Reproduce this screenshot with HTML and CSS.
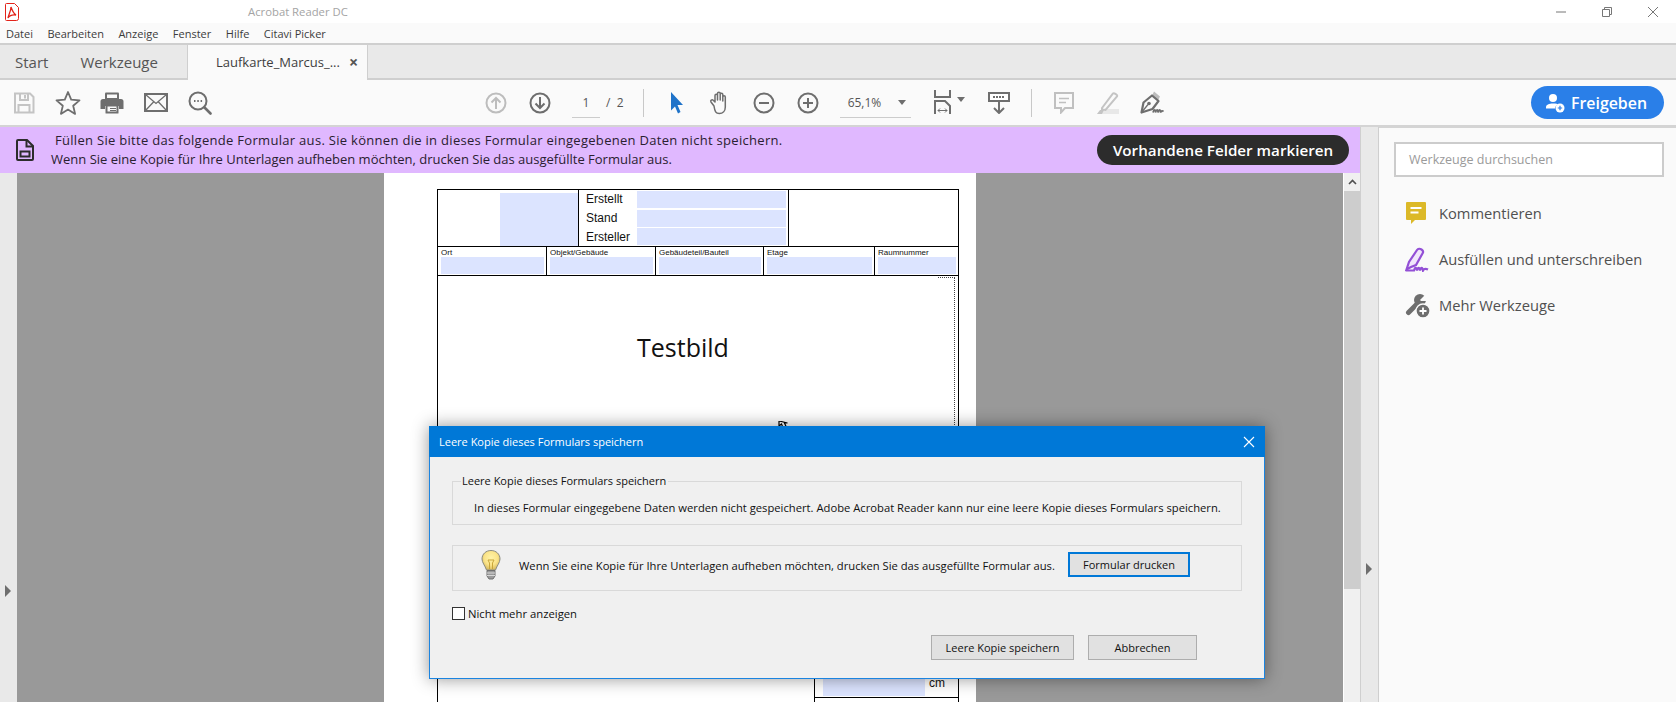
FILE: index.html
```html
<!DOCTYPE html>
<html lang="de">
<head>
<meta charset="utf-8">
<title>Acrobat Reader DC</title>
<link rel="stylesheet" href="styles.css">
</head>
<body>
<div class="app">
  <header class="titlebar">
    <svg class="pdf-logo" width="14" height="18" viewBox="0 0 14 18"><path d="M1.500.5h8l4 4v11a2 2 0 0 1-2 2h-10a1 1 0 0 1-1-1v-15a1 1 0 0 1 1-1z" fill="#fff" stroke="#e2231a"/><path d="M6 4c1 3 2 6 5 8-3-.5-6 0-8 3 .5-3 3-7 3-11z" fill="none" stroke="#e2231a" stroke-width="1.300"/></svg>
    <span class="app-title">Acrobat Reader DC</span>
    <div class="winctl">
      <svg width="12" height="12" viewBox="0 0 12 12"><path d="M1 6h10" stroke="#777"/></svg>
      <svg width="12" height="12" viewBox="0 0 12 12"><path d="M1.500 3.500h7v7h-7zM3.500 3.500v-2h7v7h-2" fill="none" stroke="#777"/></svg>
      <svg width="12" height="12" viewBox="0 0 12 12"><path d="M1 1l10 10M11 1L1 11" stroke="#777"/></svg>
    </div>
  </header>
  <nav class="menubar">
    <span>Datei</span><span>Bearbeiten</span><span>Anzeige</span><span>Fenster</span><span>Hilfe</span><span>Citavi Picker</span>
  </nav>
  <div class="tabs">
    <span class="tab-home start">Start</span>
    <span class="tab-home tools-tab">Werkzeuge</span>
    <div class="tab-doc"><span>Laufkarte_Marcus_...</span><b class="tab-x">×</b></div>
  </div>
  <div class="toolbar">
    <div class="tb-group first">
      <button class="tb"><svg width="22" height="22" viewBox="0 0 22 22"><path d="M2 1.500h15l3.500 3.500v15.500h-18.500z" fill="none" stroke="#c4c4c4" stroke-width="2"/><path d="M7 2v6h8V2M12 3v3.500M5.500 20v-7h11v7" fill="none" stroke="#c4c4c4" stroke-width="2"/></svg></button>
      <button class="tb"><svg width="26" height="26" viewBox="0 0 26 26"><path d="M13 2l3.200 7.700 8.300.7-6.300 5.400 1.900 8.100-7.100-4.300-7.100 4.300 1.900-8.100-6.300-5.400 8.300-.7z" fill="none" stroke="#6e6e6e" stroke-width="1.800" stroke-linejoin="round"/></svg></button>
      <button class="tb"><svg width="24" height="22" viewBox="0 0 24 22"><path d="M5 7V1.500a1 1 0 0 1 1-1h12a1 1 0 0 1 1 1V7z" fill="#6e6e6e"/><path d="M7 2.500h10V6H7z" fill="#fafafa"/><path d="M3 7h18a2.500 2.500 0 0 1 2.500 2.500V17H19v-3H5v3H.5V9.500A2.500 2.500 0 0 1 3 7z" fill="#6e6e6e"/><path d="M5.500 13.500h13V21a.500.500 0 0 1-.5.500H6a.500.500 0 0 1-.5-.5z" fill="#6e6e6e"/><path d="M7.500 14.500h9v5h-9z" fill="#fafafa"/><path d="M10 16.500h6M10 18.500h6" stroke="#6e6e6e"/></svg></button>
      <button class="tb"><svg width="24" height="19" viewBox="0 0 24 19"><path d="M1 1h22v17H1z" fill="none" stroke="#6e6e6e" stroke-width="2"/><path d="M1.500 1.500L12 10.500l10.500-9M1.500 17.500l8-8.500M22.500 17.500l-8-8.500" fill="none" stroke="#6e6e6e" stroke-width="1.300"/></svg></button>
      <button class="tb"><svg width="24" height="24" viewBox="0 0 24 24"><circle cx="10" cy="10" r="8.500" fill="none" stroke="#6e6e6e" stroke-width="2"/><path d="M16.500 16.500l6 6" stroke="#6e6e6e" stroke-width="2.600" stroke-linecap="round"/><path d="M6 10h1.500M9.300 10h1.500M12.600 10h1.500" stroke="#6e6e6e" stroke-width="1.800"/></svg></button>
    </div>
    <div class="tb-group pagebtns">
      <button class="tb"><svg width="22" height="22" viewBox="0 0 22 22"><circle cx="11" cy="11" r="9.500" fill="none" stroke="#bdbdbd" stroke-width="2"/><path d="M11 17V6M6.500 10.500L11 6l4.500 4.500" fill="none" stroke="#bdbdbd" stroke-width="2"/></svg></button>
      <button class="tb"><svg width="22" height="22" viewBox="0 0 22 22"><circle cx="11" cy="11" r="9.500" fill="none" stroke="#6e6e6e" stroke-width="2"/><path d="M11 5v11M6.500 11.500L11 16l4.500-4.500" fill="none" stroke="#6e6e6e" stroke-width="2"/></svg></button>
    </div>
    <span class="pageinput">1</span>
    <span class="pagecount">/ &nbsp;2</span>
    <i class="tb-sep sep-a"></i>
    <div class="tb-group viewtools">
      <button class="tb nar"><svg width="14" height="22" viewBox="0 0 14 22"><path d="M1 0l12 13H7.500l3 7-2.500 1.500-3-7L1 18.500z" fill="#1f73c9"/></svg></button>
      <button class="tb nar"><svg width="22" height="24" viewBox="0 0 22 24"><path d="M5 15L2 11c-1-1.500 1-3 2.200-1.800L6 11V4.500c0-1.800 2.500-1.800 2.500 0V9 2.500c0-1.800 2.700-1.800 2.700 0V9 3.500c0-1.800 2.600-1.800 2.600 0V10 6c0-1.800 2.500-1.800 2.500 0v10c0 4-2.500 6.500-6 6.500-3.500 0-4.500-2-5.300-7.500z" fill="none" stroke="#6e6e6e" stroke-width="1.500" stroke-linejoin="round"/></svg></button>
      <button class="tb nar"><svg width="22" height="22" viewBox="0 0 22 22"><circle cx="11" cy="11" r="9.500" fill="none" stroke="#6e6e6e" stroke-width="2"/><path d="M6 11h10" stroke="#6e6e6e" stroke-width="2"/></svg></button>
      <button class="tb nar"><svg width="22" height="22" viewBox="0 0 22 22"><circle cx="11" cy="11" r="9.500" fill="none" stroke="#6e6e6e" stroke-width="2"/><path d="M6 11h10M11 6v10" stroke="#6e6e6e" stroke-width="2"/></svg></button>
    </div>
    <div class="zoombox"><span>65,1%</span><i class="caret"></i></div>
    <svg class="ic-fit" width="17" height="25" viewBox="0 0 17 25"><path d="M1 0v7h15V0" fill="none" stroke="#6e6e6e" stroke-width="2"/><path d="M1 24V11h10l5 5v8" fill="none" stroke="#6e6e6e" stroke-width="2"/><path d="M4 20.500h9M6 18.500l-2 2 2 2M11 18.500l2 2-2 2" fill="none" stroke="#6e6e6e"/></svg>
    <i class="caret fit-caret"></i>
    <svg class="ic-next" width="22" height="22" viewBox="0 0 22 22"><path d="M1 1h20v8H1z" fill="#fff" stroke="#6e6e6e" stroke-width="2"/><path d="M5 5h12" stroke="#6e6e6e" stroke-width="2" stroke-dasharray="2 1"/><path d="M11 9v12M6 16l5 5 5-5" fill="none" stroke="#6e6e6e" stroke-width="2"/></svg>
    <i class="tb-sep sep-b"></i>
    <svg class="ic-comment" width="20" height="22" viewBox="0 0 20 22"><path d="M1 1h18v15H11l-4 4.500V16H1z" fill="none" stroke="#c0c0c0" stroke-width="2"/><path d="M5 6.500h10M5 10.500h7" stroke="#c0c0c0" stroke-width="1.500"/></svg>
    <svg class="ic-high" width="22" height="22" viewBox="0 0 22 22"><path d="M0 22h22v-5H7l-2 2H3z" fill="#e8e8e8"/><path d="M0 22l3-4 4 0-2 4z" fill="#c4c4c4"/><path d="M5 16L16 1.500c1-1 5 1.500 4 3L8.500 18l-3.500-.5z" fill="none" stroke="#c4c4c4" stroke-width="2"/></svg>
    <svg class="ic-pen" width="24" height="23" viewBox="0 0 24 23"><path d="M12 5l2-4.500 6 5-2 4z" fill="#bdbdbd"/><path d="M1.500 21.500l2-10L12 4.500l6.500 5.500-6 8z" fill="none" stroke="#6e6e6e" stroke-width="2.200" stroke-linejoin="round"/><circle cx="9" cy="12.500" r="1.800" fill="#6e6e6e"/><path d="M1.500 21.500l6.500-8" stroke="#6e6e6e" stroke-width="1.300"/><path d="M13 21.500c1-3.500 2.500-3.500 2.500 0 1-3.500 2.500-3.500 2.500 0 1-3.500 2.500-3.500 2.500 0 1-2 2-2 3-1" fill="none" stroke="#6e6e6e" stroke-width="1.800"/></svg>
    <button class="share">
      <svg width="19" height="20" viewBox="0 0 19 20"><circle cx="7" cy="5" r="4" fill="#fff"/><path d="M0 14.500c0-3 3-4 7-4s4.500.5 5 1c-2 1-3 2.500-3 4H0z" fill="#fff"/><circle cx="14" cy="15" r="4.500" fill="#fff"/><path d="M11.800 15h4.400M14 12.800v4.400" stroke="#2a7fe8" stroke-width="1.200"/></svg>
      <span>Freigeben</span>
    </button>
  </div>
  <div class="workspace">
    <div class="center">
      <div class="banner">
        <svg class="banner-ic" width="18" height="22" viewBox="0 0 18 22"><path d="M2 1h9l6 6v13a1 1 0 0 1-1 1H2a1 1 0 0 1-1-1V2a1 1 0 0 1 1-1z" fill="none" stroke="#2c2c2c" stroke-width="2"/><path d="M10.500 1v6.500H17" fill="none" stroke="#2c2c2c" stroke-width="2"/><path d="M4.500 12.500h9v5h-9z" fill="none" stroke="#2c2c2c" stroke-width="2"/></svg>
        <div class="banner-text">
          <p class="line-a">Füllen Sie bitte das folgende Formular aus. Sie können die in dieses Formular eingegebenen Daten nicht speichern.</p>
          <p>Wenn Sie eine Kopie für Ihre Unterlagen aufheben möchten, drucken Sie das ausgefüllte Formular aus.</p>
        </div>
        <button class="highlight">Vorhandene Felder markieren</button>
      </div>
      <div class="viewer">
        <div class="left-strip"><i class="tri"></i></div>
        <div class="canvas">
          <div class="page">
            <div class="form">
              <div class="form-head">
                <div class="logo-cell"><div class="logo-field"></div></div>
                <div class="meta-cell">
                  <div class="meta-row"><span>Erstellt</span><i></i></div>
                  <div class="meta-row"><span>Stand</span><i></i></div>
                  <div class="meta-row"><span>Ersteller</span><i></i></div>
                </div>
                <div class="blank-cell"></div>
              </div>
              <div class="form-cols">
                <div class="col"><span>Ort</span><i></i></div>
                <div class="col"><span>Objekt/Gebäude</span><i></i></div>
                <div class="col"><span>Gebäudeteil/Bauteil</span><i></i></div>
                <div class="col"><span>Etage</span><i></i></div>
                <div class="col"><span>Raumnummer</span><i></i></div>
              </div>
              <div class="form-image">
                <div class="dots"></div>
                <div class="testbild">Testbild</div>
                <div class="cm-block"><i></i><span>cm</span><b class="cm-rule"></b></div>
              </div>
            </div>
          </div>
        </div>
        <div class="scrollbar">
          <div class="sb-up"><svg width="9" height="6" viewBox="0 0 9 6"><path d="M1 5l3.500-3.500L8 5" fill="none" stroke="#505050" stroke-width="1.600"/></svg></div>
          <div class="sb-thumb"></div>
        </div>
      </div>
    </div>
    <div class="collapse-strip"><i class="tri"></i></div>
    <aside class="panel">
      <div class="search">Werkzeuge durchsuchen</div>
      <div class="panel-item">
        <svg width="22" height="25" viewBox="0 0 22 25"><path d="M2 1h18a1 1 0 0 1 1 1v16a1 1 0 0 1-1 1H10l-4 4v-4H2a1 1 0 0 1-1-1V2a1 1 0 0 1 1-1z" fill="#dcb928"/><path d="M5.500 7h11M5.500 11.500h8" stroke="#fff" stroke-width="2"/></svg>
        <span>Kommentieren</span>
      </div>
      <div class="panel-item">
        <svg width="25" height="25" viewBox="0 0 25 25"><path d="M1.500 22.500L4 15 12 3c1-1.500 3-1.500 4.500-.5 1.500 1 2 2.500 1 4L11 18l-5 2z" fill="#f1e6fb" stroke="#9350d6" stroke-width="2.200"/><path d="M1 23.500h8c1-3.500 2.500-3.500 3 0 1-3.500 2.500-3.500 3 0 1-3.500 2.500-3.500 3 0 1-2 3-2 5-1" fill="none" stroke="#9350d6" stroke-width="2.200"/></svg>
        <span>Ausfüllen und unterschreiben</span>
      </div>
      <div class="panel-item">
        <svg width="25" height="25" viewBox="0 0 25 25"><path d="M3.500 19.500L12 11" stroke="#6e6e6e" stroke-width="5" stroke-linecap="round"/><circle cx="15" cy="7" r="6" fill="#6e6e6e"/><path d="M15.500 6.500L22 0v8h-6.500z" fill="#fafafa"/><circle cx="18" cy="18" r="7" fill="#6e6e6e" stroke="#fafafa" stroke-width="1.300"/><path d="M14.500 18h7M18 14.500v7" stroke="#fff" stroke-width="1.800"/></svg>
        <span>Mehr Werkzeuge</span>
      </div>
    </aside>
  </div>

  <svg class="mouse" width="12" height="9" viewBox="0 0 12 9"><path d="M1 0v5l2.500-2 2 5 3-1.500-2-4.500h3z" fill="#fff" stroke="#000" stroke-width="1.200"/></svg>

  <section class="dialog">
    <div class="dlg-title"><span>Leere Kopie dieses Formulars speichern</span>
      <svg width="12" height="12" viewBox="0 0 12 12"><path d="M1 1l10 10M11 1L1 11" stroke="#fff" stroke-width="1.100"/></svg>
    </div>
    <div class="dlg-body">
      <fieldset class="group-a">
        <legend>Leere Kopie dieses Formulars speichern</legend>
        <p>In dieses Formular eingegebene Daten werden nicht gespeichert. Adobe Acrobat Reader kann nur eine leere Kopie dieses Formulars speichern.</p>
      </fieldset>
      <div class="group-b">
        <svg class="bulb" width="20" height="30" viewBox="0 0 20 30">
          <defs><radialGradient id="bulbfill" cx="50%" cy="38%" r="60%"><stop offset="0" stop-color="#fff3a8"/><stop offset="0.6" stop-color="#fbe489"/><stop offset="1" stop-color="#d9bd62"/></radialGradient></defs>
          <path d="M10 .5c5 0 9 3.500 9 8.500 0 3.500-3 6.500-4.500 11h-9C4 15.500 1 12.500 1 9 1 4 5 .5 10 .5z" fill="url(#bulbfill)" stroke="#8c8c80"/>
          <path d="M7 10h6l-1.500 3v6M7 10l1.500 3v6" fill="none" stroke="#c9a63a"/>
          <path d="M6 20.500h8v5.500l-2 3H8l-2-3z" fill="#9a9a9a" stroke="#707070"/>
          <path d="M6 23h8M6 25.500h8" stroke="#d8d8d8"/>
        </svg>
        <span class="tip">Wenn Sie eine Kopie für Ihre Unterlagen aufheben möchten, drucken Sie das ausgefüllte Formular aus.</span>
        <button class="dbtn primary">Formular drucken</button>
      </div>
      <label class="check"><i></i><span>Nicht mehr anzeigen</span></label>
      <div class="dlg-actions">
        <button class="dbtn save">Leere Kopie speichern</button>
        <button class="dbtn cancel">Abbrechen</button>
      </div>
    </div>
  </section>
</div>
</body>
</html>
```
FILE: styles.css
```css
* { box-sizing: border-box; }
html, body { margin: 0; padding: 0; }
body { font-family: "Open Sans", "Liberation Sans", sans-serif; background: #fff; color: #222; overflow: hidden; }
button { font-family: inherit; padding: 0; border: 0; background: none; }
i { font-style: normal; display: block; }
p { margin: 0; }

.app { position: relative; width: 1676px; height: 702px; overflow: hidden; display: flex; flex-direction: column; }

.titlebar { height: 23px; background: #fff; display: flex; align-items: center; position: relative; padding-left: 5px; flex: none; }
.pdf-logo { flex: none; }
.app-title { margin-left: 229px; font-size: 11.300px; color: #a4a4a4; }
.winctl { margin-left: auto; margin-right: 17px; display: flex; gap: 34px; }

.menubar { height: 20px; background: #fafafa; display: flex; align-items: center; padding-left: 6px; gap: 14.500px; font-size: 11px; color: #3c3c3c; flex: none; }

.tabs { height: 37px; background: #e9e9e9; border-top: 2px solid #cfcfcf; border-bottom: 2px solid #cfcfcf; display: flex; align-items: center; position: relative; font-size: 15px; color: #555; flex: none; }
.tab-home { display: block; }
.start { margin-left: 15px; }
.tools-tab { margin-left: 32px; }
.tab-doc { position: absolute; left: 187px; top: 0; height: 35px; width: 181px; background: #fafafa; border: solid #cfcfcf; border-width: 0 1px; display: flex; align-items: center; padding: 0 0 2px 28px; font-size: 13px; color: #3e3e3e; }
.tab-x { position: absolute; left: 161px; font-size: 16px; color: #555; }

.toolbar { height: 47px; background: #fafafa; border-bottom: 2px solid #d4d4d4; display: flex; align-items: center; flex: none; }
.tb-group { display: flex; }
.first { margin-left: 2px; }
.pagebtns { margin-left: 252px; }
.tb { width: 44px; height: 30px; display: flex; align-items: center; justify-content: center; }
.tb.nar { width: 43.670px; }
.pageinput { margin-left: 10px; width: 28px; height: 30px; line-height: 30px; text-align: center; font-size: 12px; color: #555; border-bottom: 1px solid #ccc; }
.pagecount { margin-left: 6px; width: 17px; font-size: 12px; color: #555; white-space: nowrap; }
.tb-sep { width: 1px; height: 28px; background: #c8c8c8; }
.sep-a { margin-left: 20px; margin-right: 11px; }
.zoombox { margin-left: 10px; width: 71px; height: 30px; border-bottom: 1px solid #ccc; display: flex; align-items: center; padding-left: 8px; font-size: 12px; color: #555; }
.caret { width: 0; height: 0; border: 4px solid transparent; border-top: 5px solid #6e6e6e; border-bottom: 0; }
.zoombox .caret { margin-left: 17px; }
.ic-fit { margin-left: 23px; }
.fit-caret { margin-left: 6px; margin-bottom: 6px; }
.ic-next { margin-left: 23px; }
.sep-b { margin-left: 21px; }
.ic-comment { margin-left: 22px; }
.ic-high { margin-left: 23px; }
.ic-pen { margin-left: 21px; }
.share { margin-left: auto; margin-right: 12px; width: 133px; height: 33px; border-radius: 17px; background: #2a7fe8; color: #fff; font-size: 15.900px; font-weight: 600; display: flex; align-items: center; padding-left: 15px; gap: 6px; }

.workspace { flex: 1; min-height: 0; display: flex; }
.center { width: 1361px; display: flex; flex-direction: column; border-right: 1px solid #cfcfcf; flex: none; }
.banner { height: 46px; background: #e0b8ff; display: flex; align-items: center; position: relative; padding-left: 16px; font-size: 13px; color: #2a2030; flex: none; }
.banner-ic { flex: none; }
.banner-text { margin-left: 17px; line-height: 19px; white-space: nowrap; }
.line-a { margin-left: 4px; letter-spacing: .3px; }
.highlight { position: absolute; left: 1097px; top: 8px; width: 252px; height: 30px; border-radius: 15px; background: #2c2c2c; color: #fff; font-size: 15.200px; font-weight: 600; }

.viewer { flex: 1; min-height: 0; display: flex; }
.left-strip { width: 17px; background: #e9e9e9; display: flex; align-items: center; padding-left: 5px; padding-top: 307px; flex: none; }
.tri { width: 0; height: 0; border: solid transparent; border-width: 6px 0 6px 6px; border-left-color: #6e6e6e; }
.canvas { flex: 1; background: #999; display: flex; justify-content: center; border-right: 1px solid #fff; }
.page { width: 592px; background: #fff; position: relative; overflow: hidden; padding: 16px 0 0 53px; }

.form { width: 522px; height: 520px; border: 1px solid #000; border-bottom: 0; display: flex; flex-direction: column; font-family: "Liberation Sans", Arial, sans-serif; color: #111; }
.form-head { height: 57px; display: flex; border-bottom: 1px solid #000; flex: none; }
.logo-cell { width: 141px; border-right: 1px solid #000; padding: 3px 0 0 62px; }
.logo-field { width: 78px; height: 53px; background: #dce4ff; }
.meta-cell { width: 210px; border-right: 1px solid #000; display: flex; flex-direction: column; }
.meta-row { height: 19px; display: flex; align-items: center; padding-left: 7px; font-size: 12px; }
.meta-row span { width: 51px; }
.meta-row i { width: 149px; height: 17px; background: #dce4ff; }
.blank-cell { flex: 1; }
.form-cols { height: 29px; display: grid; grid-template-columns: 109px 109px 108px 111px 1fr; border-bottom: 1px solid #000; flex: none; }
.col { border-right: 1px solid #000; font-size: 8px; padding-top: 1px; display: flex; flex-direction: column; }
.col:last-child { border-right: 0; }
.col span { height: 9px; padding-left: 3px; line-height: 9px; }
.col i { height: 17px; margin: 0 2px 0 3px; background: #dce4ff; }
.form-image { flex: 1; position: relative; }
.dots { position: absolute; right: 3px; top: 1px; width: 17px; height: 150px; border: dotted #444; border-width: 1px 1px 0 0; }
.testbild { margin-top: 56px; text-align: center; font-family: "Open Sans", sans-serif; font-size: 25px; line-height: 30px; color: #111; padding-right: 30px; }
.cm-block { position: absolute; right: 0; top: 403px; width: 144px; height: 30px; border-left: 1px solid #000; display: flex; font-size: 12px; padding-left: 8px; }
.cm-block i { width: 102px; height: 17px; background: #dce4ff; }
.cm-block span { margin-left: 4px; line-height: 9px; }
.cm-rule { position: absolute; left: 0; right: 0; top: 18px; height: 1px; background: #000; }

.scrollbar { width: 16px; background: #f0f0f0; flex: none; }
.sb-up { height: 18px; display: flex; align-items: center; justify-content: center; }
.sb-thumb { height: 398px; background: #cdcdcd; }

.collapse-strip { width: 18px; background: #e9e9e9; border-right: 1px solid #cfcfcf; padding: 436px 0 0 5px; display: flex; align-items: flex-start; flex: none; }
.panel { flex: 1; background: #fafafa; border-top: 1px solid #d4d4d4; padding: 14px 12px 0 15px; }
.search { height: 35px; border: 2px solid #ccc; background: #fff; font-size: 12.500px; color: #9a9a9a; line-height: 31px; padding-left: 13px; }
.panel-item { height: 46px; display: flex; align-items: center; font-size: 14.700px; color: #505050; position: relative; padding-left: 45px; }
.panel-item svg { position: absolute; left: 11px; }
.search + .panel-item { margin-top: 13px; }

.mouse { position: absolute; left: 778px; top: 421px; }

.dialog { position: absolute; left: 429px; top: 426px; width: 836px; height: 253px; background: #f0f0f0; border: solid #1b84e0; border-width: 0 1px 1px; box-shadow: 0 0 16px rgba(0,0,0,.42); display: flex; flex-direction: column; font-size: 11px; color: #111; }
.dlg-title { height: 31px; margin: 0 -1px; background: #0078d7; color: #fff; display: flex; align-items: center; justify-content: space-between; padding: 0 10px; flex: none; }
.dlg-body { flex: 1; padding: 24px 22px 0 22px; display: flex; flex-direction: column; }
fieldset { margin: 0; padding: 0; border: 1px solid #d9d9d9; }
.group-a { height: 44px; position: relative; padding: 18px 0 0 21px; flex: none; }
.group-a legend { position: absolute; left: 8px; top: -9px; background: #f0f0f0; padding: 0 2px 0 1px; line-height: 16px; }
.group-a p { line-height: 16px; white-space: nowrap; font-size: 11.220px; }
.group-b { margin-top: 20px; height: 46px; border: 1px solid #d9d9d9; display: flex; align-items: center; padding: 0 0 6px 28px; position: relative; flex: none; }
.tip { margin-left: 18px; white-space: nowrap; font-size: 11.220px; }
.dbtn { font-size: 11px; background: #e1e1e1; border: 1px solid #adadad; color: #111; }
.primary { position: absolute; left: 615px; top: 6px; width: 122px; height: 25px; border: 2px solid #0078d7; }
.check { display: flex; align-items: center; margin-top: 14px; height: 16px; font-size: 11.300px; }
.check i { width: 13px; height: 13px; border: 1px solid #333; background: #fff; margin-right: 3px; }
.dlg-actions { margin-top: 14px; padding-left: 479px; display: flex; gap: 14px; }
.save { width: 143px; height: 25px; }
.cancel { width: 109px; height: 25px; }
```
